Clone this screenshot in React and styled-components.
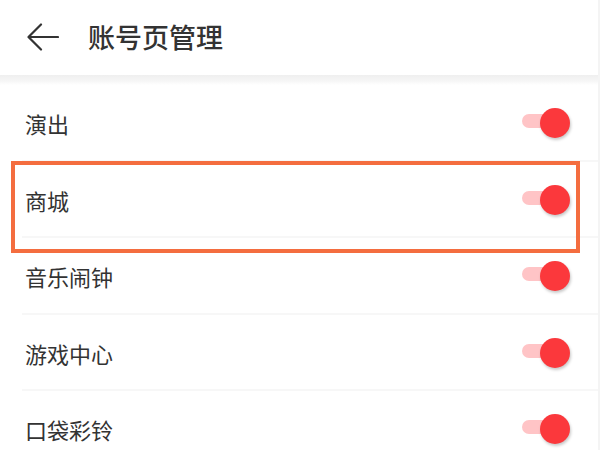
import React from "react";
import styled, { createGlobalStyle } from "styled-components";

const Global = createGlobalStyle`
  html, body { margin: 0; padding: 0; background: #fff; }
  body { font-family: "Noto Sans CJK SC", "Noto Sans", sans-serif; overflow: hidden; }
`;

const Page = styled.div`
  width: 600px;
  height: 450px;
  overflow: hidden;
  background: #fff;
  display: flex;
  flex-direction: column;
  border-right: 2px solid #f4f4f4;
  box-sizing: border-box;
`;

const Header = styled.div`
  height: 75px;
  flex: none;
  display: flex;
  align-items: center;
  padding-left: 27px;
  gap: 29px;
  box-sizing: border-box;
`;

const BackButton = styled.div`
  width: 32px;
  height: 28px;
  display: flex;
  align-items: center;
  margin-top: -2px;
`;

const Title = styled.h1`
  margin: 0;
  font-size: 27px;
  font-weight: 500;
  color: #333;
  margin-top: -2px;
`;

const Band = styled.div`
  height: 10px;
  flex: none;
  background: linear-gradient(#efefef, #f6f6f6 60%, #fff);
`;

const List = styled.div`
  position: relative;
  display: flex;
  flex-direction: column;
`;

const Row = styled.div`
  height: 76.5px;
  flex: none;
  display: flex;
  align-items: center;
  justify-content: space-between;
  padding: 0 28px 0 25px;
  box-sizing: border-box;
  position: relative;
  &::after {
    content: "";
    position: absolute;
    left: 22px;
    right: 0;
    bottom: 0;
    height: 2px;
    background: #f7f7f7;
  }
`;

const Label = styled.span`
  font-size: 22px;
  color: #333;
`;

const Switch = styled.div`
  position: relative;
  width: 48px;
  height: 30px;
  display: flex;
  align-items: center;
`;

const Track = styled.div`
  width: 38px;
  height: 14px;
  border-radius: 7px;
  background: #ffc4c6;
  margin-top: -4px;
`;

const Knob = styled.div`
  position: absolute;
  right: 0;
  top: 0;
  width: 30px;
  height: 30px;
  border-radius: 50%;
  background: #fb383c;
  box-shadow: 1px 2px 3px rgba(0, 0, 0, 0.22);
`;

const Highlight = styled.div`
  position: absolute;
  left: 11px;
  top: 76px;
  width: 569px;
  height: 92px;
  border: 4px solid #f46d3f;
  box-sizing: border-box;
  pointer-events: none;
`;

const items = ["演出", "商城", "音乐闹钟", "游戏中心", "口袋彩铃"];

export default function App() {
  return (
    <>
      <Global />
      <Page>
        <Header>
          <BackButton>
            <svg width="32" height="28" viewBox="0 0 32 28" fill="none">
              <path
                d="M31 14H2M14 1.5L1.5 14L14 26.5"
                stroke="#333"
                strokeWidth="2.2"
                strokeLinecap="round"
                strokeLinejoin="round"
              />
            </svg>
          </BackButton>
          <Title>账号页管理</Title>
        </Header>
        <Band />
        <List>
          {items.map((t) => (
            <Row key={t}>
              <Label>{t}</Label>
              <Switch>
                <Track />
                <Knob />
              </Switch>
            </Row>
          ))}
          <Highlight />
        </List>
      </Page>
    </>
  );
}
